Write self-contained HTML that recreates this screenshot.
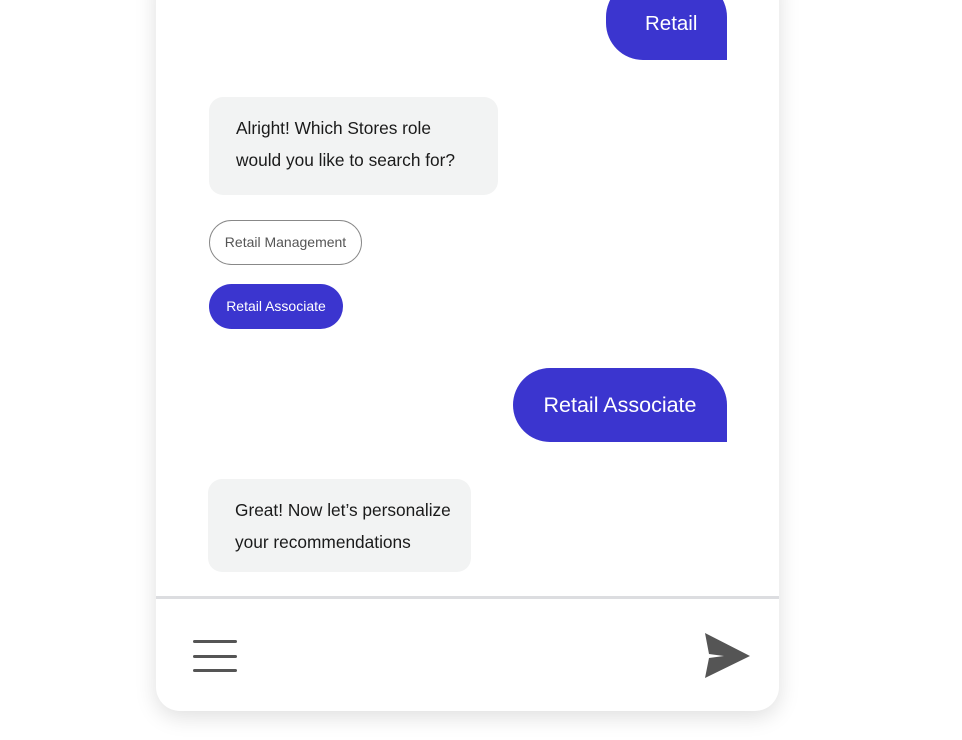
<!DOCTYPE html>
<html><head><style>
html,body{margin:0;padding:0;width:962px;height:740px;background:#fff;overflow:hidden;font-family:"Liberation Sans",sans-serif;}
.card{position:absolute;left:156px;top:-40px;width:623px;height:751px;background:#fff;border-radius:24px;box-shadow:0 6px 22px rgba(0,0,0,0.13);}
.b{position:absolute;}
.user{background:#3b35cf;color:#fff;border-radius:37px 37px 0 37px;}
.bot{background:#f2f3f3;color:#1a1a1a;border-radius:14px;font-size:17.3px;line-height:32px;padding:15px 0 0 27px;box-sizing:border-box;}
.pill{border-radius:23px;font-size:14px;box-sizing:border-box;text-align:center;}
.line{position:absolute;left:193px;width:44px;height:3px;background:#555;border-radius:2px;}
</style></head><body>
<div class="card"></div>
<div class="b user" style="left:606px;top:-20px;width:121px;height:80px;font-size:20.5px;line-height:20px;"><div style="position:absolute;left:39px;top:34px">Retail</div></div>
<div class="b bot" style="left:209px;top:97px;width:289px;height:98px;">Alright! Which Stores role<br>would you like to search for?</div>
<div class="b pill" style="left:209px;top:220px;width:153px;height:45px;border:1.3px solid #888;color:#555;line-height:43px;">Retail Management</div>
<div class="b pill" style="left:209px;top:284px;width:134px;height:45px;background:#3b35cf;color:#fff;line-height:45px;">Retail Associate</div>
<div class="b user" style="left:513px;top:368px;width:214px;height:74px;font-size:21.5px;line-height:74px;text-align:center;">Retail Associate</div>
<div class="b bot" style="left:208px;top:479px;width:263px;height:93px;">Great! Now let’s personalize<br>your recommendations</div>
<div class="b" style="left:156px;top:596px;width:623px;height:3px;background:#dcdde0;"></div>
<div class="line" style="top:640px"></div>
<div class="line" style="top:655px"></div>
<div class="line" style="top:669px"></div>
<svg class="b" style="left:700px;top:630px" width="54" height="52" viewBox="0 0 54 52"><path d="M5 3 L50 26 L5 48 L9 28 L24 26 L9 24 Z" fill="#555"/></svg>
</body></html>
